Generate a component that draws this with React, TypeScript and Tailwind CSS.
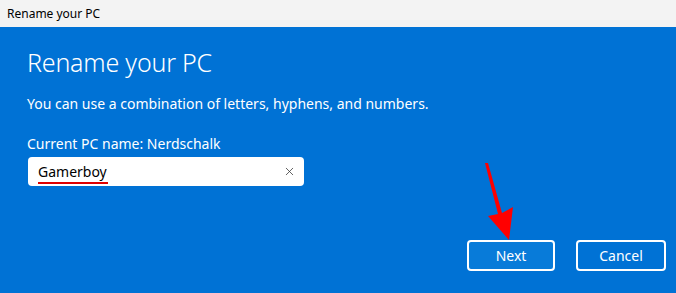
import { X } from "lucide-react";

export default function App() {
  return (
    <div
      className="relative w-[676px] h-[293px] overflow-hidden bg-[#0072d5] flex flex-col"
      style={{ fontFamily: '"Noto Sans", "Open Sans", sans-serif' }}
    >
      {/* Title bar */}
      <div className="h-[27px] bg-[#f3f3f3] flex items-center px-[7px] text-[12px] text-black">
        Rename your PC
      </div>

      {/* Dialog body */}
      <div className="flex-1 flex flex-col pl-[27px] pr-[10px] text-white">
        <h1 className="mt-[19px] text-[25px] font-light leading-[32px] tracking-[-0.2px]">
          Rename your PC
        </h1>
        <p className="mt-[16px] text-[14px] leading-[20px]">
          You can use a combination of letters, hyphens, and numbers.
        </p>
        <div className="mt-[20px] text-[14px] leading-[20px]">
          Current PC name: Nerdschalk
        </div>
        <div className="mt-[3px] ml-px w-[276px] h-[29px] bg-white rounded-[4px] flex items-center pl-[10px] pr-[8px]">
          <span className="relative flex-1 text-[14px] text-black leading-[20px]">
            Gamerboy
            <span className="absolute left-0 top-[20px] w-[70px] h-[2px] bg-[#e00000]" />
          </span>
          <X className="w-[13px] h-[13px] text-[#333]" strokeWidth={1.4} />
        </div>

        <div className="mt-auto mb-[22px] flex justify-end gap-[21px]">
          <button className="w-[88px] h-[31px] rounded-[4px] border-2 border-white bg-[#087bd9] text-[14px] text-white">
            Next
          </button>
          <button className="w-[90px] h-[31px] rounded-[4px] border-2 border-white text-[14px] text-white">
            Cancel
          </button>
        </div>
      </div>

      {/* Annotation arrow */}
      <svg className="absolute left-0 top-0 pointer-events-none" width="676" height="293">
        <polygon points="485,163 488,163 502,213 513,207 509,240 488,216 498,214" fill="#ff0000" />
      </svg>
    </div>
  );
}
